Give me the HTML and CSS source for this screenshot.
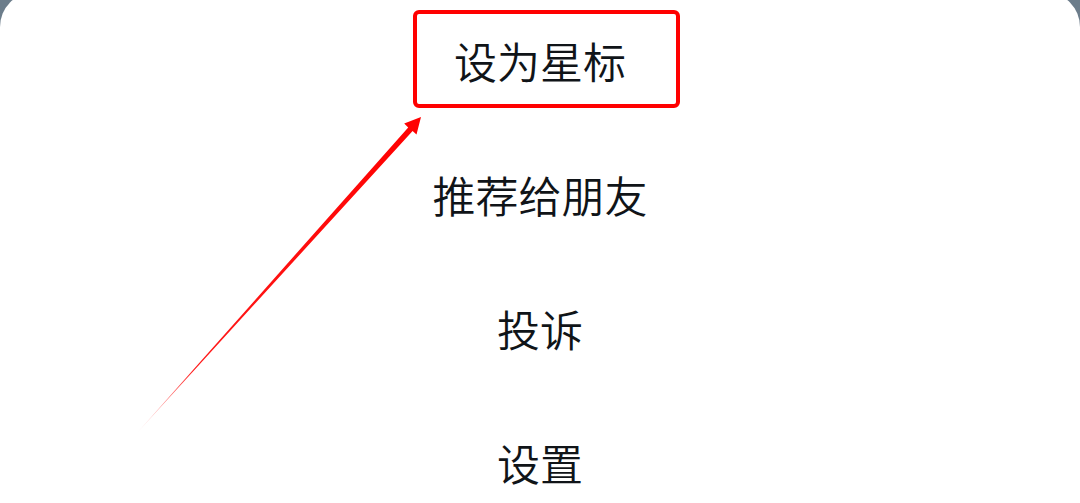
FILE: index.html
```html
<!DOCTYPE html>
<html lang="zh">
<head>
<meta charset="utf-8">
<link rel="stylesheet" href="styles.css">
</head>
<body>
<div class="sheet">
  <ul class="menu">
    <li class="item">设为星标</li>
    <li class="item">推荐给朋友</li>
    <li class="item">投诉</li>
    <li class="item">设置</li>
  </ul>
  <div class="highlight"></div>
  <svg class="arrow" width="1080" height="503" viewBox="0 0 1080 503">
    <defs>
      <linearGradient id="fade" x1="138" y1="432" x2="421" y2="117" gradientUnits="userSpaceOnUse">
        <stop offset="0" stop-color="#ff0000" stop-opacity="0.1"/>
        <stop offset="0.2" stop-color="#ff0000" stop-opacity="0.9"/>
        <stop offset="1" stop-color="#ff0000" stop-opacity="1"/>
      </linearGradient>
    </defs>
    <polygon fill="url(#fade)" points="137,433 412.6,131 416.5,134.6 421,117 404.2,123.4 408.2,127.4"/>
  </svg>
</div>
</body>
</html>
```
FILE: styles.css
```css
html, body {
  margin: 0;
  padding: 0;
  width: 1080px;
  height: 503px;
  overflow: hidden;
  background: #6c7d8b;
}
.sheet {
  position: relative;
  margin-top: -8px;
  height: 511px;
  overflow: hidden;
  background: #ffffff;
  border-radius: 35px 35px 0 0;
  padding-top: 1px;
  box-sizing: border-box;
}
.menu {
  list-style: none;
  margin: 0;
  padding: 0;
  display: flex;
  flex-direction: column;
}
.item {
  height: 134px;
  line-height: 134px;
  text-align: center;
  font-family: "Noto Sans CJK SC", "Noto Sans", sans-serif;
  font-size: 43px;
  font-weight: 350;
  color: #101418;
}
.highlight {
  position: absolute;
  left: 413px;
  top: 18px;
  width: 267px;
  height: 98px;
  box-sizing: border-box;
  border: 4px solid #ff0000;
  border-radius: 6px;
}
.arrow {
  position: absolute;
  left: 0;
  top: 8px;
}
```
